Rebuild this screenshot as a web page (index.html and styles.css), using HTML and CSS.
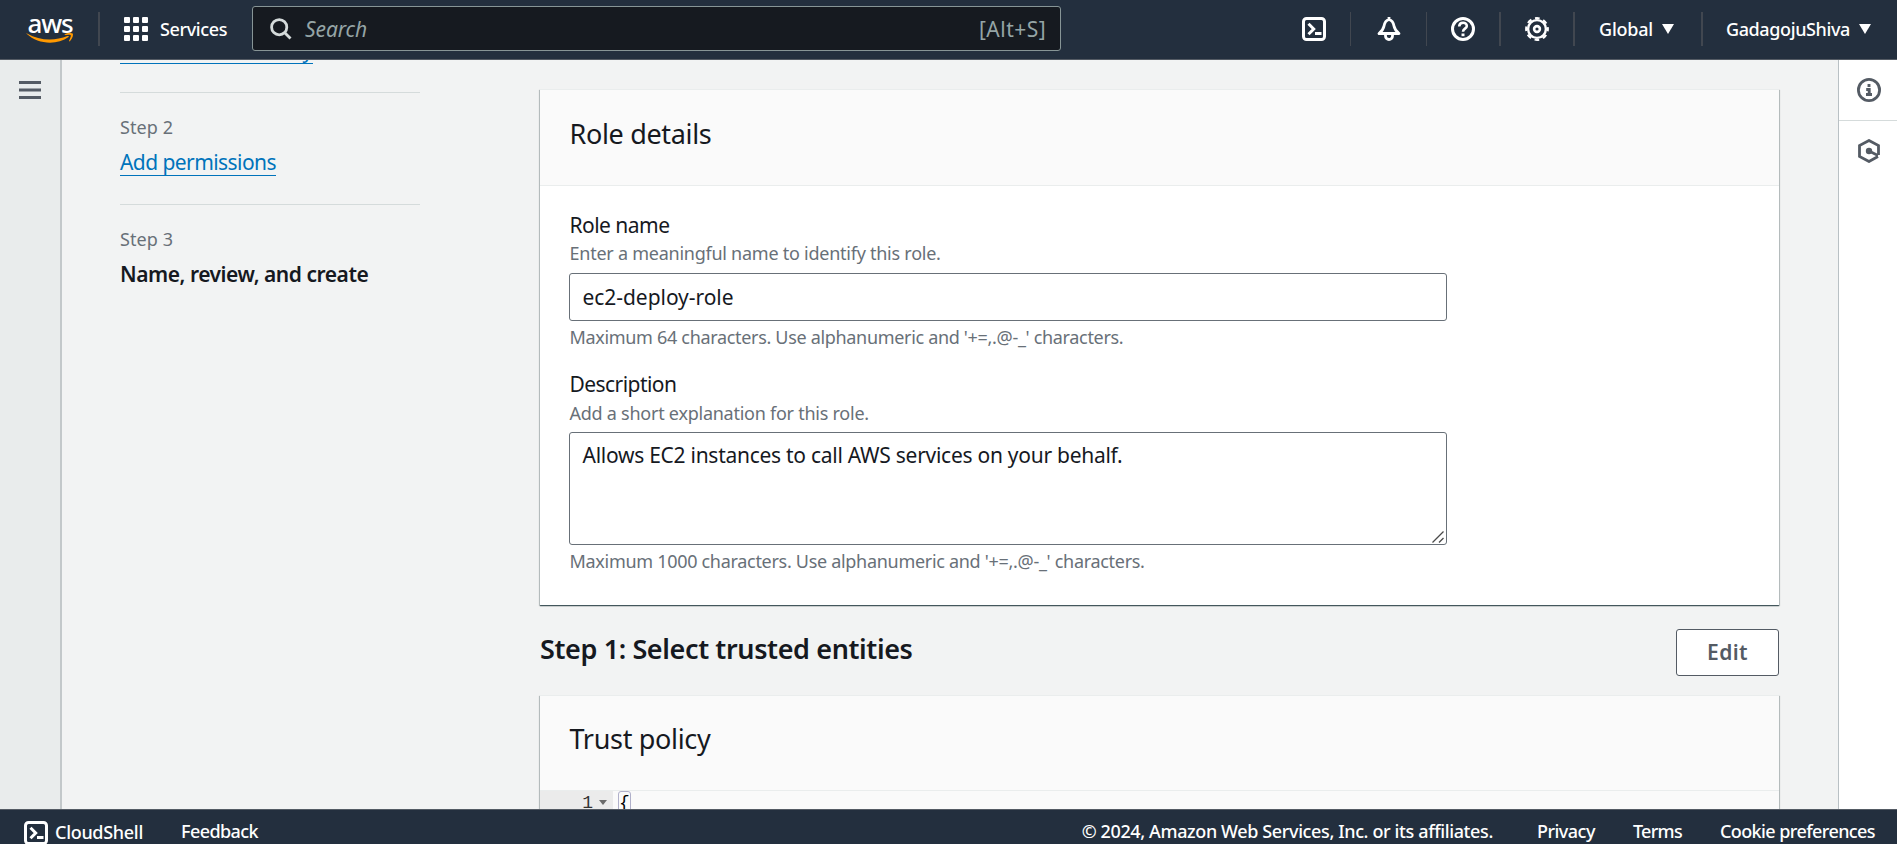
FILE: index.html
```html
<!DOCTYPE html>
<html lang="en">
<head>
<meta charset="utf-8">
<title>Create role | IAM | Global</title>
<link rel="stylesheet" href="styles.css">
</head>
<body>
<header class="topbar">
  <a class="logo"><span class="logo-word">aws</span><svg class="logo-smile" viewBox="0 0 48 11" width="48" height="11"><path d="M0.6 0.8 Q0.2 0.2 1 0.4 C14 8 29 8 41.500 3 Q43.500 2.500 42.500 4 C31 12.500 12 11.500 0.600 0.800Z" fill="#f90"/><path d="M38.500 1.600C41 -0.200 45.500 -0.200 46.800 0.700C47.600 2.800 45.800 6.500 43.600 8.400L43 8C44 5.800 45.300 3.200 44.700 2.200C43.800 1.400 40.500 1.900 38.700 2.100Z" fill="#f90"/></svg></a>
  <span class="sep sep-logo"></span>
  <a class="services">
    <svg width="24" height="24" viewBox="0 0 24 24" fill="#fff"><rect width="6" height="6" rx="1"/><rect x="9" width="6" height="6" rx="1"/><rect x="18" width="6" height="6" rx="1"/><rect y="9" width="6" height="6" rx="1"/><rect x="9" y="9" width="6" height="6" rx="1"/><rect x="18" y="9" width="6" height="6" rx="1"/><rect y="18" width="6" height="6" rx="1"/><rect x="9" y="18" width="6" height="6" rx="1"/><rect x="18" y="18" width="6" height="6" rx="1"/></svg>
    <span class="services-text">Services</span>
  </a>
  <div class="search">
    <svg width="22" height="22" viewBox="0 0 22 22" fill="none" stroke="#d5dbdb" stroke-width="2.800"><circle cx="9.200" cy="9.200" r="7.600"/><path d="M14.500 14.500L20.500 20.500"/></svg>
    <span class="search-hint">Search</span>
    <span class="search-key">[Alt+S]</span>
  </div>
  <nav class="tools">
    <a class="tool"><svg width="24" height="24" viewBox="0 0 24 24" fill="none" stroke="#fff" stroke-width="3"><rect x="1.500" y="1.500" width="21" height="21" rx="3"/><path d="M6.500 6.800L11.700 12L6.500 17.200M13 16.500H19.500"/></svg></a>
    <span class="sep thin"></span>
    <a class="tool bell"><svg width="24" height="24" viewBox="0 0 24 24" fill="none" stroke="#fff" stroke-width="2.800" stroke-linejoin="round"><path d="M12 2.500C8.500 3.500 7.500 6 7 9C6.500 12 5 14 2 16.500H22C19 14 17.500 12 17 9C16.500 6 15.500 3.500 12 2.500ZM12 0V3"/><path d="M8.500 17V19A3.500 3.500 0 0 0 15.500 19V17"/></svg></a>
    <span class="sep thin"></span>
    <a class="tool"><svg width="24" height="24" viewBox="0 0 24 24" fill="none" stroke="#fff"><circle cx="12" cy="12" r="10.500" stroke-width="3"/><path d="M8.200 9.500C8.300 4.500 15.800 4.700 15.800 8.900C15.800 11.600 12 11.700 12 14.700" stroke-width="2.600"/><path d="M12 16.500V19.200" stroke-width="3"/></svg></a>
    <span class="sep"></span>
    <a class="tool"><svg width="24" height="24" viewBox="0 0 24 24" fill="none" stroke="#fff"><circle cx="12" cy="12" r="8.900" stroke-width="2.400"/><circle cx="12" cy="12" r="10.800" stroke-width="2.200" stroke-dasharray="4.700 3.782" stroke-dashoffset="2.350"/><circle cx="12" cy="12" r="2.900" stroke-width="2.600"/></svg></a>
    <span class="sep"></span>
    <a class="menu"><span class="region">Global</span><svg width="12" height="10" viewBox="0 0 12 10"><path d="M0 0H12L6 10Z" fill="#fff"/></svg></a>
    <span class="sep"></span>
    <a class="menu account"><span class="user">GadagojuShiva</span><svg width="12" height="10" viewBox="0 0 12 10"><path d="M0 0H12L6 10Z" fill="#fff"/></svg></a>
  </nav>
</header>
<div class="shell">
  <aside class="rail-left"><svg width="22" height="18" viewBox="0 0 22 18" fill="#545b64"><path d="M0 0H22V3H0ZM0 7.500H22V10.500H0ZM0 15H22V18H0Z"/></svg></aside>
  <main class="content">
    <ol class="steps">
      <li class="step first"><a class="link l-select">Select trusted entity</a></li>
      <li class="step"><span class="step-no">Step 2</span><a class="link l-add">Add permissions</a></li>
      <li class="step"><span class="step-no">Step 3</span><strong class="current">Name, review, and create</strong></li>
    </ol>
    <div class="column">
      <section class="card">
        <h2 class="card-title">Role details</h2>
        <div class="card-body">
          <label class="label l-role">Role name</label>
          <p class="hint">Enter a meaningful name to identify this role.</p>
          <div class="input">ec2-deploy-role</div>
          <p class="rule">Maximum 64 characters. Use alphanumeric and '+=,.@-_' characters.</p>
          <label class="label l-desc">Description</label>
          <p class="hint">Add a short explanation for this role.</p>
          <div class="textarea"><span>Allows EC2 instances to call AWS services on your behalf.</span><svg class="grip" width="12" height="12" viewBox="0 0 12 12" stroke="#4a4a4a" stroke-width="1.300"><path d="M0.500 11.500L11.500 0.500M7 11.500L11.500 7"/></svg></div>
          <p class="rule rule-desc">Maximum 1000 characters. Use alphanumeric and '+=,.@-_' characters.</p>
        </div>
      </section>
      <div class="section-head"><h1 class="section-title">Step 1: Select trusted entities</h1><button class="edit">Edit</button></div>
      <section class="card policy">
        <h2 class="card-title trust">Trust policy</h2>
        <div class="code"><span class="gutter">1<i class="fold"></i></span><span class="brace">{</span></div>
      </section>
    </div>
  </main>
  <aside class="rail-right">
    <a class="rail-item ruled"><svg width="24" height="24" viewBox="0 0 24 24" fill="none" stroke="#545b64"><circle cx="12" cy="12" r="10.600" stroke-width="2.800"/><path d="M12 6V9M9.200 11.500H12.200V16.500M9 16.500H15" stroke-width="2.900"/></svg></a>
    <a class="rail-item"><svg width="24" height="24" viewBox="0 0 24 24" fill="none" stroke="#545b64"><path d="M21.500 16V6.500L12 1.500L2.500 6.500V17.500L12 22.500L21 17.600" stroke-width="2.800"/><circle cx="12" cy="12" r="3.200" fill="#545b64" stroke="none"/><path d="M12 12L21 16.500" stroke-width="2.600"/></svg></a>
  </aside>
</div>
<footer class="footer">
  <a class="shell-link"><svg width="24" height="24" viewBox="0 0 24 24" fill="none" stroke="#fff" stroke-width="3"><rect x="1.500" y="1.500" width="21" height="21" rx="3"/><path d="M6.500 6.800L11.700 12L6.500 17.200M13 16.500H19.500"/></svg><span class="f-shell">CloudShell</span></a>
  <a class="f-feedback">Feedback</a>
  <span class="f-copy">© 2024, Amazon Web Services, Inc. or its affiliates.</span>
  <a class="f-privacy">Privacy</a>
  <a class="f-terms">Terms</a>
  <a class="f-cookie">Cookie preferences</a>
</footer>
</body>
</html>
```
FILE: styles.css
```css
* { box-sizing: border-box; }
body { margin: 0; height: 844px; overflow: hidden; display: flex; flex-direction: column; font: 21px/30px "Noto Sans", sans-serif; color: #16191f; background: #f2f3f3; white-space: nowrap; }
h1, h2, p, ol { margin: 0; padding: 0; }
svg { display: block; flex: none; }

.topbar { height: 60px; flex: none; display: flex; align-items: center; padding: 0 26px 2px 26px; background: #232f3e; border-bottom: 1px solid #545b64; color: #fff; font-size: 18px; font-weight: 500; }
.logo { width: 48px; height: 30px; display: flex; flex-direction: column; align-items: center; }
.logo-word { font-size: 26px; line-height: 18px; height: 20px; letter-spacing: -1.1px; }
.sep { width: 2px; height: 34px; flex: none; background: #414750; }
.sep.thin { width: 1px; }
.sep-logo { margin-left: 24px; }
.services { display: flex; align-items: center; margin-left: 24px; width: 128px; }
.services-text { margin-left: 12px; letter-spacing: -.39px; line-height: 28px; }
.search { width: 809px; height: 45px; display: flex; align-items: center; padding: 0 14px 0 17px; background: #161a20; border: 1px solid #879596; border-radius: 3px; color: #95a5a6; font-size: 21px; font-weight: 400; }
.search-hint { margin-left: 13px; font-style: italic; letter-spacing: -.1px; }
.search-key { margin-left: auto; letter-spacing: .46px; }
.tools { flex: 1; display: flex; align-items: center; justify-content: flex-end; }
.tool { width: 72px; display: flex; justify-content: center; }
.bell { width: 75px; }
.menu { width: 126px; display: flex; align-items: center; padding-left: 24px; gap: 9px; }
.account { width: 168px; padding: 0; justify-content: flex-end; }
.region { letter-spacing: -.21px; }
.user { letter-spacing: -.38px; }

.shell { flex: 1; min-height: 0; display: flex; }
.rail-left { width: 62px; flex: none; padding: 21px 0 0 19px; background: #e9ecec; border-right: 2px solid #c3c8ca; }
.rail-right { width: 59px; flex: none; background: #fff; border-left: 1px solid #b9c0c4; }
.rail-item { height: 61px; display: flex; align-items: center; justify-content: center; padding: 0 0 2px 2px; }
.ruled { border-bottom: 1px solid #d5dbdb; padding-bottom: 0; }
.content { flex: 1; min-width: 0; display: flex; overflow: hidden; }

.steps { width: 300px; margin-left: 58px; flex: none; list-style: none; }
.step { height: 112px; display: flex; flex-direction: column; align-items: flex-start; padding-top: 20px; border-bottom: 1px solid #d5dbdb; }
.step:last-child { border: 0; }
.first { height: 33px; padding: 0; justify-content: flex-end; padding-bottom: 28px; }
.step-no { font-size: 18px; line-height: 28px; color: #687078; letter-spacing: .07px; }
.link { color: #0073bb; line-height: 26px; border-bottom: 1px solid #0073bb; margin-top: 8px; }
.l-select { letter-spacing: -.19px; }
.l-add { letter-spacing: -.57px; }
.current { font-weight: 600; line-height: 26px; margin-top: 8px; letter-spacing: -.46px; }

.column { width: 1239px; margin-left: 120px; padding-top: 29px; }
.card { background: #fff; border-top: 1px solid #eaeded; box-shadow: 0 1px 1px rgba(0,28,36,.3), 1px 1px 1px rgba(0,28,36,.15), -1px 1px 1px rgba(0,28,36,.15), 0 1px 1px #879596; }
.card-title { height: 96px; padding: 26px 30px 0 29.500px; font-size: 27px; line-height: 35px; font-weight: 400; letter-spacing: -.33px; background: #fafafa; border-bottom: 1px solid #eaeded; }
.card-body { height: 419px; padding: 24px 332px 0 29px; }
.label { display: block; padding-left: .5px; }
.l-role { letter-spacing: -.53px; }
.l-desc { margin-top: 19px; letter-spacing: -.55px; line-height: 31px; }
.hint, .rule { padding-left: .5px; font-size: 18px; line-height: 26px; color: #687078; letter-spacing: -.25px; }
.rule { margin-top: 3px; letter-spacing: -.32px; }
.rule-desc { letter-spacing: -.3px; }
.input, .textarea { border: 1px solid #687078; border-radius: 3px; background: #fff; padding: 8px 12.500px; }
.input { height: 48px; margin-top: 7px; letter-spacing: -.05px; }
.textarea { position: relative; height: 113px; margin-top: 6px; padding-top: 7px; letter-spacing: -.27px; }
.grip { position: absolute; right: 2px; bottom: 1px; }

.section-head { height: 90px; display: flex; justify-content: space-between; }
.section-title { margin-top: 25px; font-size: 27px; line-height: 38px; font-weight: 600; letter-spacing: -.38px; }
.edit { width: 103px; height: 47px; margin-top: 24px; padding: 0 0 2px; background: #fff; border: 1px solid #545b64; border-radius: 3px; font: 600 21px/30px "Noto Sans", sans-serif; color: #545b64; letter-spacing: .4px; }
.trust { height: 95px; padding-top: 25px; letter-spacing: -.32px; }
.code { height: 120px; display: flex; background: #fafafa; font: 18px/25px "Liberation Mono", monospace; }
.gutter { width: 73px; display: flex; justify-content: flex-end; gap: 6px; padding-right: 6px; background: #ebebeb; color: #333; }
.fold { margin-top: 9px; height: 0; border: 4px solid transparent; border-top: 5px solid #6b6b6b; border-bottom: 0; }
.brace { height: 25px; margin-left: 5px; width: 13px; display: flex; justify-content: center; border: 1px solid #b0b0ca; border-radius: 3px; line-height: 22px; color: #000; }

.footer { height: 35px; flex: none; display: flex; padding: 11px 22px 0 24px; background: #232f3e; border-top: 1px solid #545b64; color: #fff; font-size: 18px; line-height: 21px; font-weight: 500; }
.shell-link { display: flex; gap: 7px; width: 157px; }
.f-shell { padding-top: 1px; letter-spacing: -.3px; }
.f-feedback { letter-spacing: -.59px; }
.f-copy { margin-left: auto; letter-spacing: -.38px; }
.f-privacy { margin-left: 44px; letter-spacing: -.51px; }
.f-terms { margin-left: 38px; letter-spacing: -.72px; }
.f-cookie { margin-left: 38px; letter-spacing: -.59px; }
```
